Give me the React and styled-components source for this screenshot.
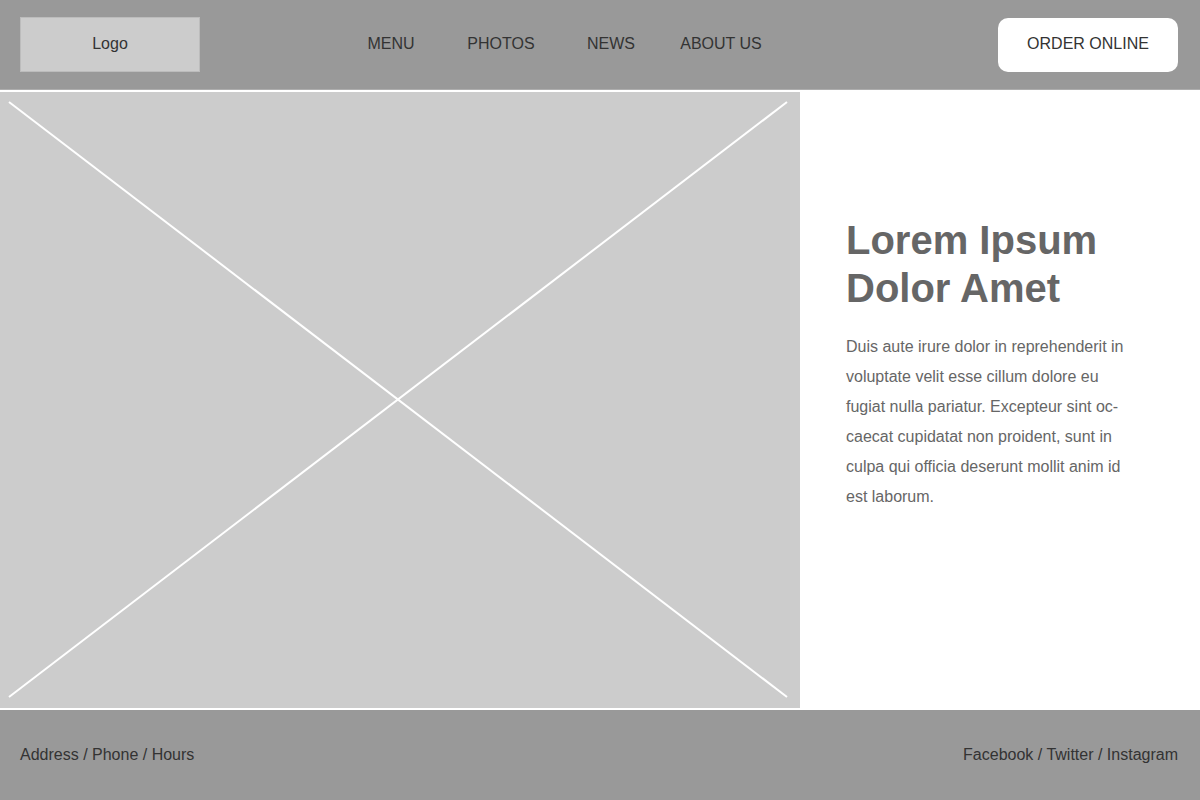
import React from "react";
import styled, { createGlobalStyle } from "styled-components";

const GlobalStyle = createGlobalStyle`
  html, body { margin: 0; padding: 0; }
  body {
    font-family: "Liberation Sans", Arial, sans-serif;
    background: #ffffff;
  }
  * { box-sizing: border-box; }
`;

const Page = styled.div`
  width: 1200px;
  height: 800px;
  display: flex;
  flex-direction: column;
  overflow: hidden;
`;

const Header = styled.header`
  height: 90px;
  flex: none;
  background: #999999;
  border-bottom: 1px solid #adadad;
  display: flex;
  align-items: center;
  justify-content: space-between;
  padding: 0 22px 0 20px;
`;

const Logo = styled.div`
  width: 180px;
  height: 55px;
  padding-bottom: 2px;
  background: #cccccc;
  border: 1px solid #bcbcbc;
  display: flex;
  align-items: center;
  justify-content: center;
  font-size: 16px;
  color: #333333;
`;

const Nav = styled.nav`
  display: flex;
  margin-left: 136px;
  padding-bottom: 2px;
`;

const NavItem = styled.a`
  width: 110px;
  text-align: center;
  font-size: 16px;
  color: #333333;
  text-decoration: none;
`;

const OrderButton = styled.button`
  margin-left: auto;
  margin-top: 1px;
  width: 180px;
  height: 54px;
  padding: 0 0 2px;
  border: none;
  border-radius: 10px;
  background: #ffffff;
  font-family: "Liberation Sans", Arial, sans-serif;
  font-size: 16px;
  color: #333333;
`;

const Main = styled.main`
  height: 620px;
  flex: none;
  display: grid;
  grid-template-columns: 800px 400px;
`;

const ImageWrap = styled.div`
  padding: 2px 0;
`;

const Placeholder = styled.div`
  width: 800px;
  height: 616px;
  background: #cccccc;
  svg { display: block; }
`;

const TextPanel = styled.section`
  padding: 126px 0 0 46px;
`;

const Title = styled.h1`
  margin: 0 0 20px;
  font-size: 40px;
  line-height: 48px;
  font-weight: 700;
  color: #666666;
`;

const Body = styled.p`
  margin: 0;
  width: 288px;
  font-size: 16px;
  line-height: 30px;
  color: #666666;
`;

const Footer = styled.footer`
  height: 90px;
  flex: none;
  background: #999999;
  display: flex;
  align-items: center;
  justify-content: space-between;
  padding: 0 22px 0 20px;
  font-size: 16px;
  color: #333333;
`;

export default function App() {
  return (
    <>
      <GlobalStyle />
      <Page>
        <Header>
          <Logo>Logo</Logo>
          <Nav>
            <NavItem>MENU</NavItem>
            <NavItem>PHOTOS</NavItem>
            <NavItem>NEWS</NavItem>
            <NavItem>ABOUT US</NavItem>
          </Nav>
          <OrderButton>ORDER ONLINE</OrderButton>
        </Header>
        <Main>
          <ImageWrap>
            <Placeholder>
              <svg width="800" height="616" viewBox="0 0 800 616">
                <line x1="9" y1="10" x2="787" y2="605" stroke="#ffffff" strokeWidth="2" />
                <line x1="787" y1="10" x2="9" y2="605" stroke="#ffffff" strokeWidth="2" />
              </svg>
            </Placeholder>
          </ImageWrap>
          <TextPanel>
            <Title>
              Lorem Ipsum
              <br />
              Dolor Amet
            </Title>
            <Body>
              Duis aute irure dolor in reprehenderit in voluptate velit esse cillum dolore eu
              fugiat nulla pariatur. Excepteur sint oc-caecat cupidatat non proident, sunt in
              culpa qui officia deserunt mollit anim id est laborum.
            </Body>
          </TextPanel>
        </Main>
        <Footer>
          <span>Address / Phone / Hours</span>
          <span>Facebook / Twitter / Instagram</span>
        </Footer>
      </Page>
    </>
  );
}
